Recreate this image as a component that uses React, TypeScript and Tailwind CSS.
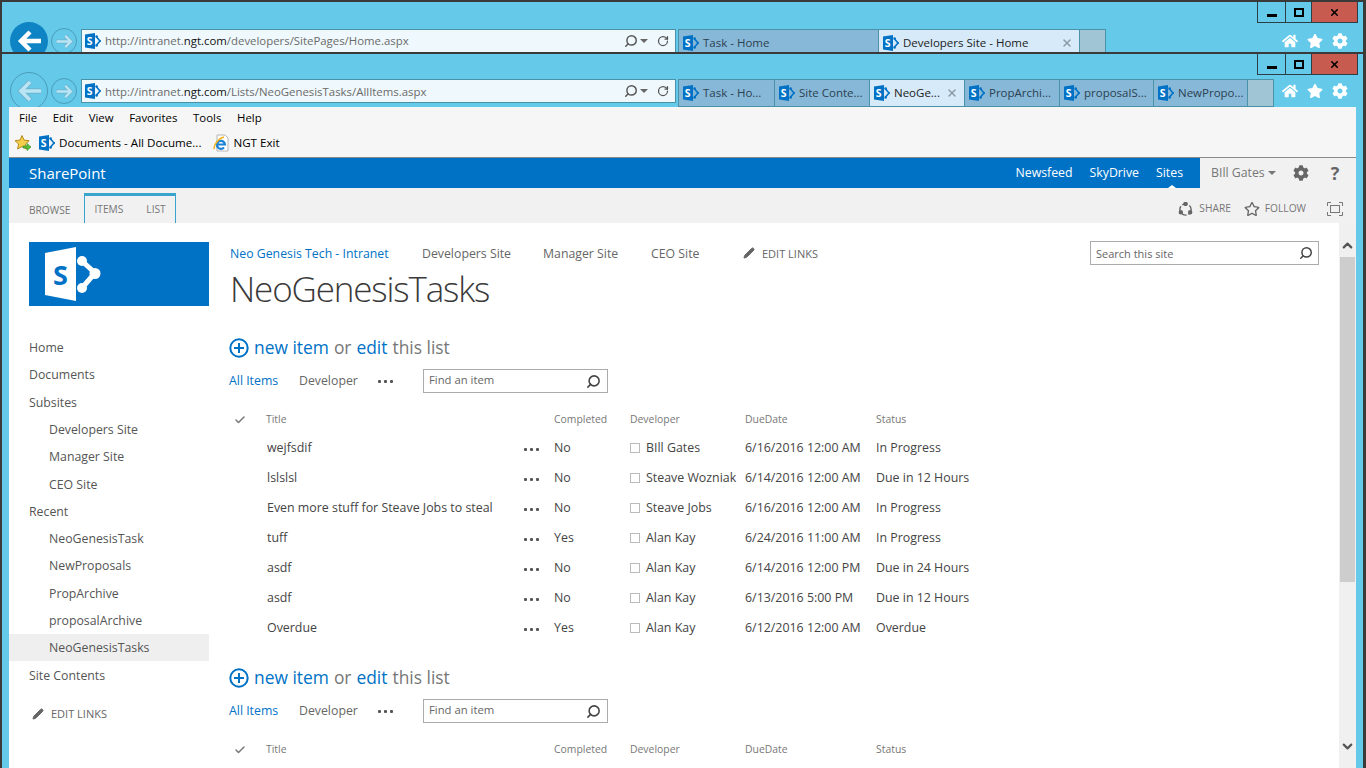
import React from 'react';
import { ChevronDown, ChevronUp, Check, Pencil, Search, X, RotateCw } from 'lucide-react';
import { FaCog, FaHome, FaStar, FaRegStar } from 'react-icons/fa';

const SpIcon = () => (
  <svg viewBox="0 0 16 16" className="shrink-0 w-[16px] h-[16px]">
    <path d="M0 1.6 L10 0 V16 L0 14.4 Z" fill="#0072c6" />
    <text x="1.8" y="12" fontSize="10.5" fontWeight="700" fontFamily="Open Sans, sans-serif" fill="#fff">S</text>
    <path d="M11.6 4 L15 8 L11.6 12" fill="none" stroke="#0072c6" strokeWidth="1.6" />
    <circle cx="11.6" cy="3.6" r="1.3" fill="#0072c6" />
    <circle cx="15" cy="8" r="1" fill="#0072c6" />
    <circle cx="11.6" cy="12.4" r="1.3" fill="#0072c6" />
  </svg>
);

const Dots = () => (
  <svg viewBox="0 0 15 3" className="w-[15px] h-[3px]">
    <rect x="0" y="0" width="3" height="3" rx="1" fill="#555" />
    <rect x="6" y="0" width="3" height="3" rx="1" fill="#555" />
    <rect x="12" y="0" width="3" height="3" rx="1" fill="#555" />
  </svg>
);

const WindowControls = () => (
  <div className="flex justify-end h-[21px] pr-[5px]">
    <div className="flex border border-t-0 border-[#2c3e46] h-[21px]">
      <div className="w-[28px] flex items-end justify-center pb-[5px] border-r border-[#2c3e46]">
        <div className="w-[10px] h-[3px] bg-black" />
      </div>
      <div className="w-[26px] flex items-center justify-center border-r border-[#2c3e46]">
        <div className="w-[10px] h-[9px] border-2 border-black" />
      </div>
      <div className="w-[45px] bg-[#c75b50] flex items-center justify-center">
        <X size={11} strokeWidth={3.5} className="text-black" />
      </div>
    </div>
  </div>
);

type Tab = { label: string; width: string; active?: boolean };

type ChromeProps = { path: string; tabs: Tab[]; active?: boolean; height: string; rowGap: string; urlPad?: string };

const Chrome = ({ path, tabs, active, height, rowGap, urlPad = '' }: ChromeProps) => (
  <div className={`border-t-2 border-[#3a3a3a] overflow-hidden shrink-0 ${height}`}>
    <WindowControls />
    <div className={`flex items-start pl-[8px] ${rowGap}`}>
      <div className={`w-[38px] h-[38px] rounded-full -mt-[7px] shrink-0 flex items-center justify-center ${active ? 'bg-[#0f84c4]' : 'border border-[#4a9db8]'}`}>
        <svg viewBox="0 0 26 26" className="w-[26px] h-[26px]" fill="none">
          {!active && <path d="M25 13H5M14 4l-9 9 9 9" stroke="#6fb4cc" strokeWidth="5.5" />}
          <path d="M25 13H5M14 4l-9 9 9 9" stroke={active ? '#fff' : '#b8e4f3'} strokeWidth={active ? 4.4 : 3.6} />
        </svg>
      </div>
      <div className="w-[26px] h-[26px] rounded-full border border-[#4a9db8] ml-[3px] -mt-[1px] shrink-0 flex items-center justify-center">
        <svg viewBox="0 0 24 24" className="w-[19px] h-[19px]" fill="none">
          <path d="M2 12h18M13 5l7 7-7 7" stroke="#6fb4cc" strokeWidth="5" />
          <path d="M2 12h18M13 5l7 7-7 7" stroke="#b8e4f3" strokeWidth="3" />
        </svg>
      </div>
      <div className="ml-[4px] w-[595px] h-[24px] bg-[#eff8fc] border border-[#4a92a8] flex items-center pl-[3px] pr-[6px] shrink-0">
        <SpIcon />
        <span className={`ml-[4px] text-[11.4px] text-[#6b6b6b] whitespace-nowrap ${urlPad}`}>
          http://intranet.<span className="text-[#111]">ngt.com</span>{path}
        </span>
        <div className="ml-auto flex items-center text-[#555]">
          <Search size={14} strokeWidth={2.5} className="-scale-x-100" />
          <svg viewBox="0 0 8 4" className="w-[8px] h-[4px] ml-[2px]"><path d="M0 0h8L4 4z" fill="#666" /></svg>
          <RotateCw size={12} strokeWidth={2.5} className="ml-[9px]" />
        </div>
      </div>
      <div className="ml-[2px] flex h-[28px] shrink-0">
        {tabs.map(t => (
          <div key={t.label} className={`${t.width} border border-r-0 border-[#4a92a8] flex items-center pl-[4px] pr-[6px] ${t.active ? 'bg-[#d6eafa]' : 'bg-[#87b8d8]'}`}>
            <SpIcon />
            <span className={`ml-[4px] text-[11.5px] whitespace-nowrap ${t.active ? 'text-[#222]' : 'text-[#2d4150]'}`}>{t.label}</span>
            {t.active && <X size={12} strokeWidth={3} className="ml-auto text-[#8a9aa5]" />}
          </div>
        ))}
        <div className="w-[27px] bg-[#a0c6d5] border border-[#4a92a8]" />
      </div>
      <div className="ml-auto mr-[15px] mt-[4px] flex items-center gap-[9px] text-white shrink-0">
        <FaHome size={16} />
        <FaStar size={16} />
        <FaCog size={16} />
      </div>
    </div>
  </div>
);

const navItems = [
  { t: 'Home' }, { t: 'Documents' }, { t: 'Subsites' },
  { t: 'Developers Site', sub: true }, { t: 'Manager Site', sub: true }, { t: 'CEO Site', sub: true },
  { t: 'Recent' },
  { t: 'NeoGenesisTask', sub: true }, { t: 'NewProposals', sub: true }, { t: 'PropArchive', sub: true }, { t: 'proposalArchive', sub: true },
  { t: 'NeoGenesisTasks', sub: true, sel: true },
  { t: 'Site Contents' },
];

const rows = [
  ['wejfsdif', 'No', 'BIll Gates', '6/16/2016 12:00 AM', 'In Progress'],
  ['lslslsl', 'No', 'Steave Wozniak', '6/14/2016 12:00 AM', 'Due in 12 Hours'],
  ['Even more stuff for Steave Jobs to steal', 'No', 'Steave Jobs', '6/16/2016 12:00 AM', 'In Progress'],
  ['tuff', 'Yes', 'Alan Kay', '6/24/2016 11:00 AM', 'In Progress'],
  ['asdf', 'No', 'Alan Kay', '6/14/2016 12:00 PM', 'Due in 24 Hours'],
  ['asdf', 'No', 'Alan Kay', '6/13/2016 5:00 PM', 'Due in 12 Hours'],
  ['Overdue', 'Yes', 'Alan Kay', '6/12/2016 12:00 AM', 'Overdue'],
];

const cols = 'grid grid-cols-[37px_258px_30px_76px_115px_131px_1fr] items-center';

const ListBlock = ({ showRows }: { showRows: boolean }) => (
  <div className={showRows ? '' : 'mt-[23px]'}>
    <div className="h-[24px] flex items-center text-[17.4px] text-[#777] whitespace-nowrap">
      <svg viewBox="0 0 20 20" className="w-[20px] h-[20px] mr-[5px] mt-[2px]" fill="none" stroke="#0072c6" strokeWidth="2">
        <circle cx="10" cy="10" r="8.7" />
        <path d="M10 5v10M5 10h10" />
      </svg>
      <span className="text-[#0072c6]">new item</span>
      <span className="mx-[5px]">or</span>
      <span className="text-[#0072c6]">edit</span>
      <span className="ml-[5px]">this list</span>
    </div>
    <div className="mt-[10px] h-[24px] flex items-center text-[12.3px]">
      <span className="text-[#0072c6] w-[70px]">All Items</span>
      <span className="text-[#666] w-[79px]">Developer</span>
      <Dots />
      <div className="ml-[30px] w-[185px] h-[24px] border border-[#ababab] flex items-center pl-[5px] pr-[6px] text-[#666] text-[11.3px]">
        <span className="pb-[2px]">Find an item</span>
        <Search size={15} strokeWidth={2.5} className="ml-auto -scale-x-100 text-[#444]" />
      </div>
    </div>
    <div className={`${cols} mt-[12px] h-[27px] pt-[2px] text-[10.4px] text-[#777]`}>
      <Check size={12} strokeWidth={3} className="ml-[5px] text-[#777]" />
      <span>Title</span>
      <span />
      <span>Completed</span>
      <span>Developer</span>
      <span>DueDate</span>
      <span>Status</span>
    </div>
    {showRows && rows.map((r, i) => (
      <div key={i} className={`${cols} h-[30px] pt-[2px] text-[12.4px] text-[#444]`}>
        <span />
        <span className="pl-[1px] whitespace-nowrap">{r[0]}</span>
        <span className="pt-[3px]"><Dots /></span>
        <span>{r[1]}</span>
        <span className="flex items-center whitespace-nowrap">
          <span className="w-[10px] h-[10px] border border-[#bbb] mr-[6px] shrink-0" />
          {r[2]}
        </span>
        <span className="whitespace-nowrap">{r[3]}</span>
        <span className="whitespace-nowrap">{r[4]}</span>
      </div>
    ))}
  </div>
);

export default function App() {
  return (
    <div className="w-[1366px] h-[768px] overflow-hidden bg-[#65c9ea] border-l-2 border-r-[3px] border-[#3a3a3a] font-['Open_Sans',sans-serif] flex flex-col">
      <Chrome
        height="h-[52px]"
        rowGap="mt-[6px]"
        active
        path="/developers/SitePages/Home.aspx"
        tabs={[
          { label: 'Task - Home', width: 'w-[200px]' },
          { label: 'Developers Site - Home', width: 'w-[201px]', active: true },
        ]}
      />
      <Chrome
        height="h-[55px]"
        rowGap="mt-[4px]"
        urlPad="pt-[2px]"
        path="/Lists/NeoGenesisTasks/AllItems.aspx"
        tabs={[
          { label: 'Task - Ho...', width: 'w-[96px]' },
          { label: 'Site Conte...', width: 'w-[95px]' },
          { label: 'NeoGe...', width: 'w-[95px]', active: true },
          { label: 'PropArchi...', width: 'w-[95px]' },
          { label: 'proposalS...', width: 'w-[94px]' },
          { label: 'NewPropo...', width: 'w-[94px]' },
        ]}
      />
      <div className="flex-1 min-h-0 ml-[7px] mr-[7px] flex flex-col bg-white">
        <div className="h-[51px] bg-[#f6f6f6] border-b border-[#8a8a8a] shrink-0 text-[11.6px] text-black">
          <div className="h-[22px] flex items-center pl-[10px] gap-[15.7px] text-[11.4px]">
            <span>File</span><span>Edit</span><span>View</span><span>Favorites</span><span>Tools</span><span>Help</span>
          </div>
          <div className="h-[28px] flex items-center pl-[6px] whitespace-nowrap">
            <svg viewBox="0 0 16 16" className="w-[16px] h-[16px]">
              <path d="M7 .5l2.1 4.6 5 .6-3.7 3.4 1 5L7 11.6 2.6 14l1-5L0 5.7l5-.6z" fill="#f6cf4a" stroke="#b58a1e" />
              <path d="M8 11h4V8.5l4 3.5-4 3.5V13H8z" fill="#5bbf3a" stroke="#2f8a22" strokeWidth=".6" />
            </svg>
            <span className="ml-[8px]"><SpIcon /></span>
            <span className="ml-[4px]">Documents - All Docume...</span>
            <svg viewBox="0 0 16 18" className="w-[16px] h-[18px] ml-[12px]">
              <path d="M4 1h8l3 3v13H4z" fill="#fff" stroke="#b5b5b5" />
              <path d="M4.5 10.5h7.5a4 4 0 1 0-1 3" fill="none" stroke="#1e83d6" strokeWidth="2.2" />
              <path d="M1 15C1 10 6 4 11 3" fill="none" stroke="#f0b323" strokeWidth="1.6" />
            </svg>
            <span className="ml-[4px]">NGT Exit</span>
          </div>
        </div>
        <div className="h-[30px] flex shrink-0">
          <div className="w-[1191px] bg-[#0072c6] flex items-center pl-[20px] text-white relative">
            <span className="text-[15px]">SharePoint</span>
            <div className="ml-auto flex gap-[17px] pr-[17px] text-[12.3px]">
              <span>Newsfeed</span><span>SkyDrive</span><span>Sites</span>
            </div>
            <div className="absolute right-[24px] bottom-0 w-0 h-0 border-x-[4px] border-x-transparent border-b-[3px] border-b-white" />
          </div>
          <div className="flex-1 bg-[#f1f1f1] flex items-center pl-[11px] text-[12.3px] text-[#777]">
            <span className="pt-[1px]">BIll Gates</span>
            <svg viewBox="0 0 8 4" className="w-[8px] h-[4px] ml-[3px]"><path d="M0 0h8L4 4z" fill="#777" /></svg>
            <FaCog size={16} className="ml-[17px] text-[#666]" />
            <span className="ml-[22px] text-[18px] font-bold text-[#666]">?</span>
          </div>
        </div>
        <div className="h-[35px] bg-[#f1f1f1] flex items-end shrink-0 text-[10.2px] text-[#777]">
          <span className="ml-[20px] mb-[5px]">BROWSE</span>
          <div className="ml-[14px] h-[30px] w-[92px] border-t-[3px] border-x border-[#39a5cc] flex items-center pl-[9px] gap-[23px]">
            <span>ITEMS</span><span>LIST</span>
          </div>
          <div className="ml-auto flex items-center h-[35px] pt-[7px] pr-[13px]">
            <svg viewBox="0 0 16 16" className="w-[15px] h-[15px]" fill="none" stroke="#666" strokeWidth="1.5">
              <circle cx="8" cy="8" r="6" strokeDasharray="6 2" />
              <circle cx="3" cy="11" r="1.6" fill="#666" />
              <circle cx="13" cy="11" r="1.6" fill="#666" />
              <circle cx="8" cy="2" r="1.6" fill="#666" />
            </svg>
            <span className="ml-[6px]">SHARE</span>
            <FaRegStar size={16} className="ml-[13px] text-[#666]" />
            <span className="ml-[5px]">FOLLOW</span>
            <svg viewBox="0 0 16 14" className="w-[16px] h-[14px] ml-[21px]" fill="none" stroke="#777">
              <rect x="3.5" y="3.5" width="9" height="7" />
              <path d="M.5 4V.5H4M12 .5h3.5V4M15.5 10v3.5H12M4 13.5H.5V10" />
            </svg>
          </div>
        </div>
        <div className="flex-1 min-h-0 flex overflow-hidden">
          <div className="w-[200px] shrink-0 pt-[19px] text-[12.3px] text-[#555]">
            <div className="h-[64px] ml-[20px] w-[180px] bg-[#0072c6] flex items-center pl-[16px]">
              <svg viewBox="0 0 56 56" className="w-[56px] h-[56px]">
                <path d="M0 7 L31 1 V55 L0 49 Z" fill="#fff" />
                <text x="8" y="39" fontSize="27" fontWeight="700" fontFamily="Open Sans, sans-serif" fill="#0072c6">S</text>
                <path d="M37 15 L50 27 L37 42" fill="none" stroke="#fff" strokeWidth="5" />
                <circle cx="37" cy="15" r="5" fill="#fff" />
                <circle cx="50" cy="27.5" r="5.5" fill="#fff" />
                <circle cx="37" cy="42" r="5" fill="#fff" />
              </svg>
            </div>
            <div className="mt-[27.6px]">
              {navItems.map(n => (
                <div key={n.t} className={`h-[27.3px] pt-[2px] flex items-center ${n.sub ? 'pl-[40px]' : 'pl-[20px]'} ${n.sel ? 'bg-[#efefef]' : ''}`}>{n.t}</div>
              ))}
            </div>
            <div className="mt-[17.4px] ml-[23px] flex items-center text-[11px] text-[#666]">
              <Pencil size={12} className="mr-[7px]" fill="#666" />EDIT LINKS
            </div>
          </div>
          <div className="flex-1 min-w-0 pl-[20px] pt-[19px]">
            <div className="flex items-center h-[22px] text-[12.3px] text-[#666] whitespace-nowrap">
              <span className="text-[#0072c6] ml-[1px] w-[192px] pt-[2px]">Neo Genesis Tech - Intranet</span>
              <span className="w-[121px] pt-[2px]">Developers Site</span>
              <span className="w-[108px] pt-[2px]">Manager Site</span>
              <span className="w-[92px] pt-[2px]">CEO Site</span>
              <Pencil size={12} className="mr-[7px]" fill="#666" />
              <span className="text-[11px] pt-[2px]">EDIT LINKS</span>
              <div className="ml-auto mr-[20px] w-[229px] h-[24px] border border-[#ababab] flex items-center px-[5px] text-[11px] bg-white">
                <span className="pt-[2px]">Search this site</span>
                <Search size={14} strokeWidth={2.5} className="ml-auto -scale-x-100 text-[#444]" />
              </div>
            </div>
            <div className="h-[50px] flex items-center ml-[1px] text-[35px] tracking-[-1.15px] font-light text-[#3a3a3a] whitespace-nowrap">NeoGenesisTasks</div>
            <div className="mt-[21px]">
              <ListBlock showRows />
              <ListBlock showRows={false} />
            </div>
          </div>
          <div className="w-[17px] shrink-0 bg-[#f0f0f0] flex flex-col items-center text-[#555]">
            <ChevronUp size={15} strokeWidth={3.5} className="mt-[15px]" />
            <div className="mt-[4px] w-[15px] h-[325px] bg-[#cdcdcd]" />
            <ChevronDown size={15} strokeWidth={3.5} className="mt-auto mb-[14px]" />
          </div>
        </div>
      </div>
    </div>
  );
}
